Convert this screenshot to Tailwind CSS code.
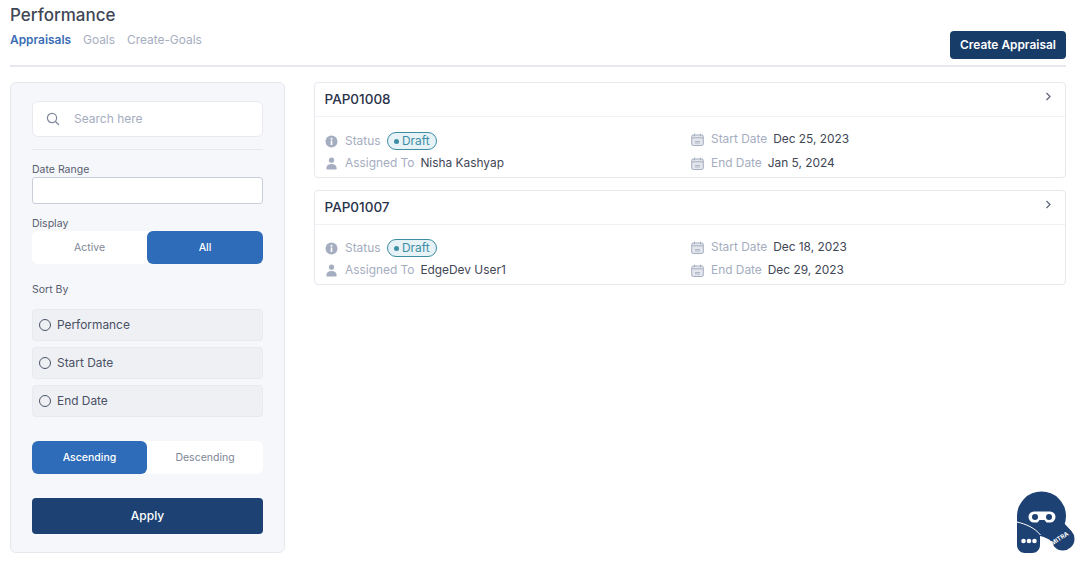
<!DOCTYPE html>
<html>
<head>
<meta charset="utf-8">
<script src="https://cdn.jsdelivr.net/npm/@tailwindcss/browser@4"></script>
</head>
<body class="bg-white font-['Inter',sans-serif] text-[#3f4656] overflow-hidden">
<div class="relative w-[1082px] h-[579px] px-[10px]">
  <header class="relative h-[67px] w-[1056px] border-b-2 border-[#e6e8ee]">
    <h1 class="pt-[5px] text-[17px] leading-[21px] font-medium text-[#3f4656]">Performance</h1>
    <nav class="mt-[5px] flex gap-3 text-[11.9px] leading-[18px]">
      <span class="font-semibold text-[#3a6db5]">Appraisals</span>
      <span class="text-[#a5adc0]">Goals</span>
      <span class="text-[#a5adc0]">Create-Goals</span>
    </nav>
    <button class="absolute right-0 top-[31px] h-[28px] w-[116px] rounded-[4px] bg-[#183c68] text-[11.9px] font-semibold text-white">Create Appraisal</button>
  </header>

  <main class="mt-[15px] flex gap-[29px] items-start">
    <aside class="w-[275px] h-[471px] shrink-0 rounded-[6px] border border-[#e6e8ee] bg-[#f6f7fa] px-[21px] pt-[18px]">
      <div class="flex h-[36px] items-center rounded-[6px] border border-[#e8eaef] bg-white pl-[13px]">
        <svg class="w-[14px] h-[14px] text-[#7e879b]" viewBox="0 0 14 14" fill="none" stroke="currentColor" stroke-width="1.2"><circle cx="6" cy="6" r="4.600"/><path d="M9.500 9.500 12.500 12.500" stroke-linecap="round"/></svg>
        <span class="ml-[14px] text-[12px] text-[#a5adc0]">Search here</span>
      </div>
      <div class="mt-[12px] border-t border-[#e6e8ee]"></div>
      <div class="mt-[13px] text-[10.5px] leading-[13px] text-[#565d6e]">Date Range</div>
      <div class="mt-[1px] h-[27px] rounded-[3px] border border-[#c9ced9] bg-white"></div>
      <div class="mt-[13px] text-[10.5px] leading-[13px] text-[#565d6e]">Display</div>
      <div class="mt-[1px] flex h-[33px] rounded-[6px] bg-white text-[10.5px]">
        <div class="flex w-[115px] items-center justify-center text-[#7d8596]">Active</div>
        <div class="flex flex-1 items-center justify-center rounded-[6px] bg-[#2e6bb9] font-medium text-white">All</div>
      </div>
      <div class="mt-[19px] text-[10.5px] leading-[13px] text-[#565d6e]">Sort By</div>
      <div class="mt-[13px] flex flex-col gap-[6px]">
        <div class="flex h-[32px] items-center rounded-[4px] border border-[#e8eaef] bg-[#eff0f4] pl-[6px] text-[11.9px] text-[#4b5165]">
          <span class="h-[12px] w-[12px] rounded-full border border-[#4b5568]"></span><span class="ml-[6px]">Performance</span>
        </div>
        <div class="flex h-[32px] items-center rounded-[4px] border border-[#e8eaef] bg-[#eff0f4] pl-[6px] text-[11.9px] text-[#4b5165]">
          <span class="h-[12px] w-[12px] rounded-full border border-[#4b5568]"></span><span class="ml-[6px]">Start Date</span>
        </div>
        <div class="flex h-[32px] items-center rounded-[4px] border border-[#e8eaef] bg-[#eff0f4] pl-[6px] text-[11.9px] text-[#4b5165]">
          <span class="h-[12px] w-[12px] rounded-full border border-[#4b5568]"></span><span class="ml-[6px]">End Date</span>
        </div>
      </div>
      <div class="mt-[24px] flex h-[33px] rounded-[6px] bg-white text-[10.5px]">
        <div class="flex w-[115px] items-center justify-center rounded-[6px] bg-[#2e6bb9] font-medium text-white">Ascending</div>
        <div class="flex flex-1 items-center justify-center text-[#7d8596]">Descending</div>
      </div>
      <button class="mt-[24px] h-[36px] w-full rounded-[4px] bg-[#1d4173] text-[12px] font-medium text-white">Apply</button>
    </aside>

    <section class="flex w-[752px] flex-col gap-[12px]">
      <article class="h-[96px] rounded-[4px] border border-[#e6e8ee]">
        <div class="relative flex h-[34px] items-center border-b border-[#f1f2f5] pl-[9.5px] text-[13.5px] font-medium text-[#28324a]">PAP01008
          <svg class="absolute right-[14px] top-[9px] w-[6px] h-[9px] text-[#5b6274]" viewBox="0 0 6 9" fill="none" stroke="currentColor" stroke-width="1.200"><path d="M1.500 1 5 4.500 1.500 8"/></svg>
        </div>
        <div class="relative text-[11.9px]">
          <div class="absolute left-[10px] top-[14px] flex h-[20px] items-center">
            <svg class="w-[13px] h-[13px] text-[#a5adc0]" viewBox="0 0 13 13"><circle cx="6.500" cy="6.500" r="6" fill="currentColor"/><rect x="5.700" y="5.500" width="1.600" height="4.500" fill="#fff"/><circle cx="6.500" cy="3.800" r="1" fill="#fff"/></svg>
            <span class="ml-[7px] text-[#a5adc0]">Status</span>
            <span class="ml-[6.5px] flex h-[18px] items-center rounded-full border border-[#3c8ea5] bg-[#e6f2f6] pl-[6px] pr-[6px] text-[#3c8ea5]"><i class="mr-[3px] block h-[5px] w-[5px] rounded-full bg-[#3c8ea5]"></i>Draft</span>
          </div>
          <div class="absolute left-[10px] top-[36px] flex h-[20px] items-center">
            <svg class="w-[13px] h-[13px] text-[#a5adc0]" viewBox="0 0 13 13" fill="currentColor"><circle cx="6.500" cy="3.200" r="2.600"/><path d="M2 12.500c-.5 0-.7-.3-.7-.8C1.300 8.800 3 7 6.500 7s5.200 1.800 5.200 4.700c0 .5-.2.800-.7.800z"/></svg>
            <span class="ml-[7px] text-[#a5adc0]">Assigned To</span>
            <span class="ml-[6px] text-[#3f4656]">Nisha Kashyap</span>
          </div>
          <div class="absolute left-[376px] top-[12px] flex h-[20px] items-center">
            <svg class="w-[13px] h-[13px]" viewBox="0 0 13 13" fill="none"><rect x=".7" y="2" width="11.600" height="10.500" rx="1.500" fill="#e3e6ec" stroke="#a5adc0"/><path d="M1 4.800h11" stroke="#a5adc0"/><path d="M3.500.7v2.500M9.500.7v2.500" stroke="#a5adc0"/><path d="M4 8.500h5M4 10h5" stroke="#a5adc0" stroke-width=".8"/></svg>
            <span class="ml-[7px] text-[#a5adc0]">Start Date</span>
            <span class="ml-[6px] text-[#3f4656]">Dec 25, 2023</span>
          </div>
          <div class="absolute left-[376px] top-[36px] flex h-[20px] items-center">
            <svg class="w-[13px] h-[13px]" viewBox="0 0 13 13" fill="none"><rect x=".7" y="2" width="11.600" height="10.500" rx="1.500" fill="#e3e6ec" stroke="#a5adc0"/><path d="M1 4.800h11" stroke="#a5adc0"/><path d="M3.500.7v2.500M9.500.7v2.500" stroke="#a5adc0"/><path d="M4 8.500h5M4 10h5" stroke="#a5adc0" stroke-width=".8"/></svg>
            <span class="ml-[7px] text-[#a5adc0]">End Date</span>
            <span class="ml-[6px] text-[#3f4656]">Jan 5, 2024</span>
          </div>
        </div>
      </article>

      <article class="h-[95px] rounded-[4px] border border-[#e6e8ee]">
        <div class="relative flex h-[34px] items-center border-b border-[#f1f2f5] pl-[9.5px] text-[13.5px] font-medium text-[#28324a]">PAP01007
          <svg class="absolute right-[14px] top-[9px] w-[6px] h-[9px] text-[#5b6274]" viewBox="0 0 6 9" fill="none" stroke="currentColor" stroke-width="1.200"><path d="M1.500 1 5 4.500 1.500 8"/></svg>
        </div>
        <div class="relative text-[11.9px]">
          <div class="absolute left-[10px] top-[13px] flex h-[20px] items-center">
            <svg class="w-[13px] h-[13px] text-[#a5adc0]" viewBox="0 0 13 13"><circle cx="6.500" cy="6.500" r="6" fill="currentColor"/><rect x="5.700" y="5.500" width="1.600" height="4.500" fill="#fff"/><circle cx="6.500" cy="3.800" r="1" fill="#fff"/></svg>
            <span class="ml-[7px] text-[#a5adc0]">Status</span>
            <span class="ml-[6.5px] flex h-[18px] items-center rounded-full border border-[#3c8ea5] bg-[#e6f2f6] pl-[6px] pr-[6px] text-[#3c8ea5]"><i class="mr-[3px] block h-[5px] w-[5px] rounded-full bg-[#3c8ea5]"></i>Draft</span>
          </div>
          <div class="absolute left-[10px] top-[35px] flex h-[20px] items-center">
            <svg class="w-[13px] h-[13px] text-[#a5adc0]" viewBox="0 0 13 13" fill="currentColor"><circle cx="6.500" cy="3.200" r="2.600"/><path d="M2 12.500c-.5 0-.7-.3-.7-.8C1.300 8.800 3 7 6.500 7s5.200 1.800 5.200 4.700c0 .5-.2.800-.7.800z"/></svg>
            <span class="ml-[7px] text-[#a5adc0]">Assigned To</span>
            <span class="ml-[6px] text-[#3f4656]">EdgeDev User1</span>
          </div>
          <div class="absolute left-[376px] top-[12px] flex h-[20px] items-center">
            <svg class="w-[13px] h-[13px]" viewBox="0 0 13 13" fill="none"><rect x=".7" y="2" width="11.600" height="10.500" rx="1.500" fill="#e3e6ec" stroke="#a5adc0"/><path d="M1 4.800h11" stroke="#a5adc0"/><path d="M3.500.7v2.500M9.500.7v2.500" stroke="#a5adc0"/><path d="M4 8.500h5M4 10h5" stroke="#a5adc0" stroke-width=".8"/></svg>
            <span class="ml-[7px] text-[#a5adc0]">Start Date</span>
            <span class="ml-[6px] text-[#3f4656]">Dec 18, 2023</span>
          </div>
          <div class="absolute left-[376px] top-[35px] flex h-[20px] items-center">
            <svg class="w-[13px] h-[13px]" viewBox="0 0 13 13" fill="none"><rect x=".7" y="2" width="11.600" height="10.500" rx="1.500" fill="#e3e6ec" stroke="#a5adc0"/><path d="M1 4.800h11" stroke="#a5adc0"/><path d="M3.500.7v2.500M9.500.7v2.500" stroke="#a5adc0"/><path d="M4 8.500h5M4 10h5" stroke="#a5adc0" stroke-width=".8"/></svg>
            <span class="ml-[7px] text-[#a5adc0]">End Date</span>
            <span class="ml-[6px] text-[#3f4656]">Dec 29, 2023</span>
          </div>
        </div>
      </article>
    </section>
  </main>

  <svg class="absolute left-[1002px] top-[482px] w-[80px] h-[80px]" viewBox="0 0 80 80">
    <circle cx="39.500" cy="34" r="24.500" fill="#1d4173"/>
    <path d="M15 34h23v29c0 4.500-3.500 8-8 8h-7c-4.500 0-8-3.500-8-8z" fill="#1d4173"/>
    <path d="M45 40 L61 57" stroke="#1d4173" stroke-width="23" stroke-linecap="round"/>
    <path d="M38 54 C42 55 46 56 50 60 L54 70 L38 72z" fill="#fff"/>
    <path d="M15 40C24 42 33 46 38.500 53" fill="none" stroke="#fff" stroke-width="1"/>
    <path d="M32 29.500h16a5.500 5.500 0 0 1 0 11h-3.500l-2-2.500h-5l-2 2.500H32a5.500 5.500 0 0 1 0-11z" fill="#fff"/>
    <circle cx="33" cy="35" r="3" fill="#1d4173"/><circle cx="47" cy="35" r="3" fill="#1d4173"/>
    <circle cx="21.500" cy="59" r="2.300" fill="#fff"/><circle cx="27" cy="59" r="2.300" fill="#fff"/><circle cx="32.500" cy="59" r="2.300" fill="#fff"/>
    <text x="50.500" y="63.500" transform="rotate(-33 50.500 63.500)" font-family="Inter, sans-serif" font-size="6" font-weight="700" fill="#fff">MITRA</text>
  </svg>
</div>
</body>
</html>
